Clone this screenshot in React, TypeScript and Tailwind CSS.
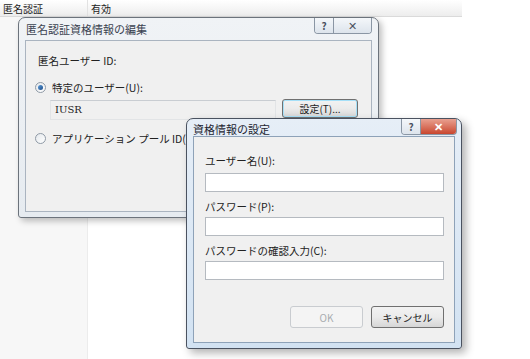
import React from 'react'

const jp = { fontFamily: '"Noto Sans CJK JP", "Noto Sans", sans-serif' }

function TitleButtons({ active }: { active?: boolean }) {
  return (
    <div className="flex h-[16px] rounded-b-[4px] border border-t-0 border-[#8a96a4] overflow-hidden">
      <div className="w-[19px] flex items-center justify-center bg-gradient-to-b from-[#f4f7fa] to-[#dde4ec] border-r border-[#8a96a4] text-[10px] leading-none text-[#4a5260] font-bold">
        ?
      </div>
      <div
        className={
          active
            ? 'w-[35px] flex items-center justify-center bg-gradient-to-b from-[#e8a090] to-[#c8452e] text-white text-[11px] leading-none font-bold'
            : 'w-[37px] flex items-center justify-center bg-gradient-to-b from-[#f4f7fa] to-[#dde4ec] text-[#4a5260] text-[11px] leading-none'
        }
      >
        ✕
      </div>
    </div>
  )
}

function Radio({ checked }: { checked?: boolean }) {
  return (
    <div className="w-[11px] h-[11px] rounded-full border border-[#8f9aa6] bg-gradient-to-br from-[#e4e8ec] to-[#ffffff] flex items-center justify-center">
      {checked && <div className="w-[5px] h-[5px] rounded-full bg-gradient-to-br from-[#5a9ad8] to-[#1e4e8a]" />}
    </div>
  )
}

function WinButton({ label, disabled, className }: { label: string; disabled?: boolean; className: string }) {
  return (
    <div
      className={
        (disabled
          ? 'border-[#c9ccd0] bg-[#f4f4f4] text-[#a8acb0] '
          : 'border-[#707070] bg-gradient-to-b from-[#f2f2f2] via-[#ebebeb] to-[#d6d6d6] text-[#222] ') +
        'rounded-[3px] border flex items-center justify-center text-[10px] ' +
        className
      }
    >
      {label}
    </div>
  )
}

export default function App() {
  return (
    <div className="relative w-[530px] h-[359px] bg-white overflow-hidden text-[#222]" style={jp}>
      {/* background list view */}
      <div className="flex w-[462px] h-[17px] bg-gradient-to-b from-[#ffffff] to-[#ededed] border-b border-[#dadada] text-[10px] items-center">
        <div className="w-[88px] pl-[3px] border-r border-[#e2e2e2] h-full flex items-center">匿名認証</div>
        <div className="pl-[3px]">有効</div>
      </div>
      <div className="w-[88px] h-[342px] bg-[#f7f7f7] border-r border-[#ececec]" />

      {/* dialog 1: edit anonymous auth credentials */}
      <div className="absolute left-[18px] top-[17px] w-[361px] h-[201px] rounded-t-[7px] rounded-b-[3px] border border-[#6c737c] bg-gradient-to-b from-[#f0f3f6] to-[#e6ebf0] shadow-[3px_3px_6px_rgba(0,0,0,0.25)] flex flex-col px-[6px] pb-[5px]">
        <div className="h-[22px] flex justify-between">
          <div className="pt-[3px] pl-[1px] text-[11px] text-[#3a4250]">匿名認証資格情報の編集</div>
          <TitleButtons />
        </div>
        <div className="flex-1 border border-[#aab4c0] bg-[#f0f0f0] pl-[9px] pt-[13px]">
          <div className="pl-[3px] text-[10.5px] leading-[14px]">匿名ユーザー ID:</div>
          <div className="flex items-center gap-[6px] mt-[12px]">
            <Radio checked />
            <span className="text-[10.5px]">特定のユーザー(U):</span>
          </div>
          <div className="flex items-start mt-[4px] ml-[15px]">
            <div
              className="w-[226px] h-[20px] border border-t-[#c9cdd2] border-l-[#e2e4e6] border-r-[#e2e4e6] border-b-[#e2e4e6] bg-[#f0f0f0] flex items-center pl-[4px] text-[10px]"
              style={{ fontFamily: '"DejaVu Serif", "Liberation Serif", serif' }}
            >
              IUSR
            </div>
            <WinButton label="設定(T)..." className="ml-[6px] -mt-[1px] w-[76px] h-[19px] border-[#3c7fb1] shadow-[inset_0_0_0_1px_#a6e0f8]" />
          </div>
          <div className="flex items-center gap-[6px] mt-[11px]">
            <Radio />
            <span className="text-[10.5px]">アプリケーション プール ID(P)</span>
          </div>
        </div>
      </div>

      {/* dialog 2: set credentials */}
      <div className="absolute left-[186px] top-[118px] w-[276px] h-[231px] rounded-t-[7px] rounded-b-[3px] border border-[#4a5260] bg-gradient-to-b from-[#e6eef7] to-[#d2e2f2] shadow-[4px_4px_8px_rgba(0,0,0,0.3)] flex flex-col px-[6px] pb-[5px]">
        <div className="h-[17px] flex justify-between">
          <div className="pt-[2px] pl-[0px] text-[11px] text-[#1e2632]">資格情報の設定</div>
          <div className="mr-[-2px]">
            <TitleButtons active />
          </div>
        </div>
        <div className="flex-1 border border-[#8ea2b8] bg-[#f0f0f0] pl-[11px] pr-[10px] pt-[17px]">
          <div className="text-[10.5px] leading-[14px]">ユーザー名(U):</div>
          <div className="mt-[5px] h-[19px] border border-[#b5bac0] bg-white" />
          <div className="mt-[8px] text-[10.5px] leading-[14px]">パスワード(P):</div>
          <div className="mt-[3px] h-[19px] border border-[#b5bac0] bg-white" />
          <div className="mt-[8px] text-[10.5px] leading-[14px]">パスワードの確認入力(C):</div>
          <div className="mt-[3px] h-[19px] border border-[#b5bac0] bg-white" />
          <div className="flex justify-end gap-[8px] mt-[26px]">
            <WinButton label="OK" disabled className="w-[73px] h-[22px]" />
            <WinButton label="キャンセル" className="w-[73px] h-[22px]" />
          </div>
        </div>
      </div>
    </div>
  )
}
